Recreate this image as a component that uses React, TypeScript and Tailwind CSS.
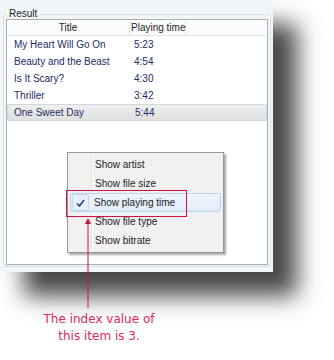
const songs = [
  { title: "My Heart Will Go On", time: "5:23" },
  { title: "Beauty and the Beast", time: "4:54" },
  { title: "Is It Scary?", time: "4:30" },
  { title: "Thriller", time: "3:42" },
  { title: "One Sweet Day", time: "5:44" },
];

const menuItems = ["Show artist", "Show file size", "Show playing time", "Show file type", "Show bitrate"];

function ListView() {
  return (
    <div className="w-[262px] h-[246px] border border-[#abadb3] border-b-[#a9a9b6] bg-white flex flex-col">
      {/* header */}
      <div className="flex h-[16px] border-b border-[#e2e5ea] bg-gradient-to-b from-white to-[#f9fafb] text-[#1e1e1e] leading-[15px] whitespace-nowrap">
        <div className="w-[123px] border-r border-[#e3e6ea] text-center">Title</div>
        <div className="w-[56px] border-r border-[#e3e6ea] pl-[1px]">Playing time</div>
      </div>
      {songs.map((s, i) => {
        const selected = i === songs.length - 1;
        return (
          <div
            key={s.title}
            className={`flex h-[17px] items-center text-[#222c66] whitespace-nowrap ${selected ? "border border-[#d6d6d6] rounded-[2px] bg-gradient-to-b from-[#efefef] to-[#e0e0e0]" : ""}`}
          >
            <div className={`w-[123px] ${selected ? "pl-[6px]" : "pl-[7px]"}`}>{s.title}</div>
            <div className="pl-[4px]">{s.time}</div>
          </div>
        );
      })}
    </div>
  );
}

function ContextMenu() {
  return (
    <div className="absolute left-[67px] top-[152px] w-[157px] h-[101px] border border-[#979797] bg-[#f1f1f1] p-[2px] shadow-[2px_2px_2px_rgba(0,0,0,0.35)] text-[#1b1b1b] whitespace-nowrap">
      {/* gutter */}
      <div className="absolute left-[23px] top-0 bottom-0 w-[2px] border-l border-l-[#e2e3e3] border-r border-r-white" />
      <div className="relative flex flex-col">
        {menuItems.map((label, i) => {
          const active = i === 2;
          return (
            <div
              key={label}
              className={`h-[19px] flex items-center ${active ? "border border-[#b4d4ef] rounded-[2px] bg-gradient-to-b from-[#eef5fc] to-[#dfecf8]" : ""}`}
            >
              {active ? (
                <div className="ml-[1px] w-[17px] h-[17px] border border-[#c2d9ef] rounded-[2px] bg-[#e6effa] flex items-center justify-center">
                  <svg width="9" height="8" viewBox="0 0 9 8">
                    <path d="M1 4.5 L3.5 7 L8 1" fill="none" stroke="#23379a" strokeWidth="1.6" />
                  </svg>
                </div>
              ) : null}
              <span className={active ? "pl-[5px]" : "pl-[25px]"}>{label}</span>
            </div>
          );
        })}
      </div>
    </div>
  );
}

export default function App() {
  return (
    <div className="relative w-[334px] h-[360px] bg-white overflow-hidden text-[10px]" style={{ fontFamily: '"Liberation Sans", Arial, sans-serif' }}>
      <div className="relative w-[273px] h-[272px] pt-[9px] bg-[#f3f6f9] shadow-[24px_24px_22px_rgba(0,0,0,0.72)]">
        <fieldset className="ml-[3px] w-[268px] h-[258px] border border-[#d5dfe5] rounded-[3px] px-[2px]">
          <legend className="ml-[1px] px-[2px] leading-[10px] text-[#1e1e1e]">Result</legend>
          <ListView />
        </fieldset>
        <ContextMenu />
      </div>

      {/* annotation */}
      <div className="absolute left-[66px] top-[190px] w-[121px] h-[27px] border border-[#c8163c]" />
      <svg className="absolute left-[84px] top-[217px]" width="8" height="92" viewBox="0 0 8 92">
        <path d="M4 1 L1 7 L7 7 Z" fill="#c8163c" />
        <line x1="4" y1="6" x2="4" y2="91" stroke="#c8163c" strokeWidth="1" />
      </svg>
      <div
        className="absolute left-0 top-[311px] w-[198px] text-center text-[12px] leading-[17px] text-[#de2a5c]"
        style={{ fontFamily: '"DejaVu Sans", sans-serif' }}
      >
        The index value of
        <br />
        this item is 3.
      </div>
    </div>
  );
}
